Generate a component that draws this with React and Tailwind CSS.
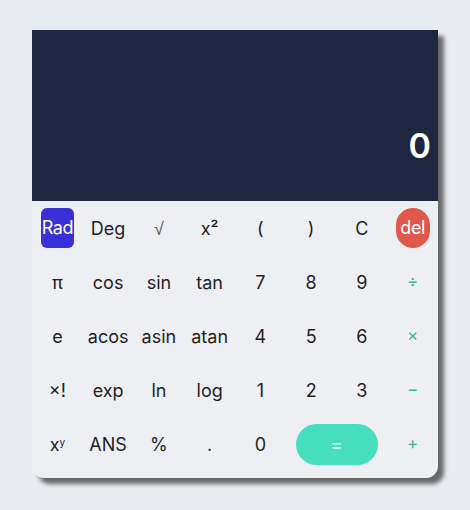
import React, { useState } from "react";

const rows = [
  ["Rad", "Deg", "√", "x²", "(", ")", "C", "del"],
  ["π", "cos", "sin", "tan", "7", "8", "9", "÷"],
  ["e", "acos", "asin", "atan", "4", "5", "6", "×"],
  ["×!", "exp", "ln", "log", "1", "2", "3", "−"],
  ["xy", "ANS", "%", ".", "0", "=", "+"],
];

const ops = ["÷", "×", "−", "+"];

const Key = ({ label }) => {
  if (label === "Rad") {
    return (
      <button className="h-[40px] w-[33px] rounded-md bg-[#3b2fd8] text-white text-[18px] leading-none tracking-tight">
        Rad
      </button>
    );
  }
  if (label === "del") {
    return (
      <button className="h-[40px] w-[34px] rounded-full bg-[#e0574b] text-white text-[18px] leading-none tracking-tight">
        del
      </button>
    );
  }
  if (label === "=") {
    return (
      <div className="col-span-2 flex items-center justify-center">
        <button className="h-[41px] w-[82px] rounded-full bg-[#46dfbc] text-white text-[18px]">
          =
        </button>
      </div>
    );
  }
  if (label === "√") {
    return (
      <span
        className="text-[18px] font-light text-[#555]"
        style={{ fontFamily: "'DejaVu Sans', sans-serif" }}
      >
        √
      </span>
    );
  }
  if (label === "xy") {
    return (
      <span className="text-[18px] text-[#1f1f1f]">
        x<sup className="text-[10px]">y</sup>
      </span>
    );
  }
  if (ops.includes(label)) {
    return <span className="text-[17px] text-[#3cb59a]">{label}</span>;
  }
  return <span className="text-[18px] text-[#1f1f1f]">{label}</span>;
};

export default function App() {
  const [value] = useState("0");
  return (
    <div
      className="min-h-[510px] w-full bg-[#e9ecf1] pt-[30px]"
      style={{ fontFamily: "Inter, Roboto, sans-serif" }}
    >
      <div className="mx-auto w-[406px] rounded-b-xl bg-[#edeff3] shadow-[6px_6px_4px_rgba(70,70,70,0.8)]">
        <div className="flex h-[171px] items-end justify-end bg-[#1e2640] pb-[38px] pr-[7px]">
          <span className="text-[34px] font-semibold leading-none text-white">{value}</span>
        </div>
        <div className="grid grid-cols-8 auto-rows-[54px] pb-[7px]">
          {rows.flat().map((label, i) =>
            label === "=" ? (
              <Key key={i} label={label} />
            ) : (
              <div key={i} className="flex items-center justify-center">
                <Key label={label} />
              </div>
            )
          )}
        </div>
      </div>
    </div>
  );
}
